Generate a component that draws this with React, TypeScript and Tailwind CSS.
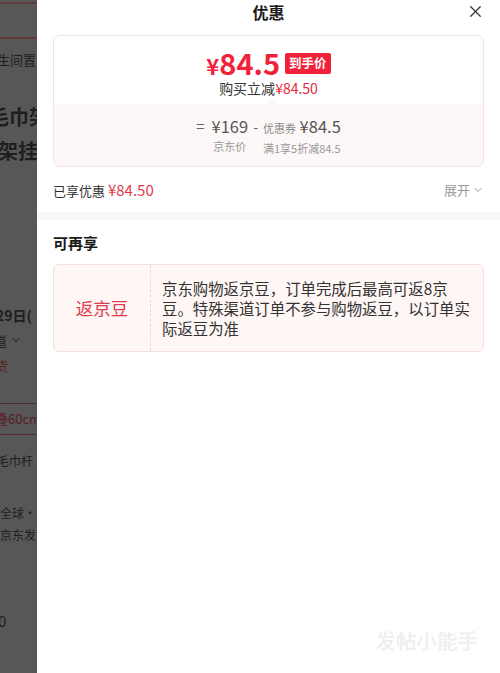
import { X, ChevronDown } from "lucide-react"

const font = { fontFamily: '"Noto Sans CJK SC", "Noto Sans", sans-serif' }

const BackdropPage = () => {
  return <div className="w-[37px] shrink-0 h-full bg-[#575757] overflow-hidden relative text-[#1e1e1e]">
    <div className="h-[2px] mt-[2px] bg-[#5e3c3c]"></div>
    <div className="h-[2px] mt-[33px] bg-[#5e3c3c]"></div>
    <div className="whitespace-nowrap text-[13px] mt-[11px] -ml-[3px]">生间置</div>
    <div className="whitespace-nowrap text-[20px] font-bold leading-[32px] mt-[31px] -ml-[11px]">毛巾架</div>
    <div className="whitespace-nowrap text-[20px] font-bold leading-[32px] mt-[2px] -ml-[2px]">架挂件</div>
    <div className="whitespace-nowrap text-[14px] font-bold mt-[138px] -ml-[4px]">29日(</div>
    <div className="whitespace-nowrap text-[13px] mt-[5px] -ml-[6px] flex items-center">道<ChevronDown size={12} className="ml-[3px]" /></div>
    <div className="whitespace-nowrap text-[13px] mt-[6px] -ml-[5px] text-[#5a1d22]">货</div>
    <div className="mt-[27px] border-y border-[#5a2a2e] h-[32px] flex items-center whitespace-nowrap text-[13px] text-[#5a1d22] -ml-[5px]">叠60cm</div>
    <div className="whitespace-nowrap text-[12px] mt-[17px] -ml-[3px]">毛巾杆</div>
    <div className="whitespace-nowrap text-[12px] mt-[34px]">全球·</div>
    <div className="whitespace-nowrap text-[12px] mt-[4px]">京东发</div>
    <div className="whitespace-nowrap text-[15px] mt-[66px] -ml-[2px]">0</div>
  </div>
}

export default function App() {
  return <div style={font} className="flex w-[500px] h-[673px] overflow-hidden bg-white">
    <BackdropPage />
    <div className="flex-1 h-full bg-white relative flex flex-col">
      <div className="h-[24px] flex items-center justify-center relative">
        <div className="text-[16px] font-bold text-[#1a1a1a] leading-none">优惠</div>
        <X size={19} strokeWidth={1.6} className="absolute right-[15px] top-[2px] text-[#333]" />
      </div>

      <div className="mx-[16px] mt-[11px] border border-[#f3e3e5] rounded-[7px] overflow-hidden">
        <div className="h-[68px] flex flex-col items-center pt-[13px]">
          <div className="flex items-center h-[27px]">
            <span className="text-[#f0233a] font-bold text-[22px] leading-none mt-[4px]">¥</span>
            <span className="text-[#f0233a] font-bold text-[29px] leading-none">84.5</span>
            <span className="ml-[5px] bg-[#f0233a] text-white text-[12.5px] font-bold rounded-[2px] px-[4px] h-[21px] flex items-center mt-[2px]">到手价</span>
          </div>
          <div className="text-[14px] leading-none mt-[5px] text-[#333]">购买立减<span className="text-[#e8293b]">¥84.50</span></div>
        </div>
        <div className="h-[62px] bg-[#fdf7f7] relative flex justify-center pt-[11px] text-[#555]">
          <div className="absolute -top-[4px] left-[215px] w-[8px] h-[8px] rotate-45 bg-[#fdf7f7]"></div>
          <div className="flex items-start">
            <span className="text-[15px] leading-[22px] mr-[7px] text-[#666]">=</span>
            <div className="flex flex-col items-center">
              <span className="text-[16.5px] leading-[22px]">¥169</span>
              <span className="text-[11px] text-[#999] mt-[4px] leading-none">京东价</span>
            </div>
            <span className="text-[14px] leading-[22px] mx-[5px] text-[#666]">-</span>
            <div className="flex flex-col items-start">
              <span className="leading-[22px]"><span className="text-[11px] text-[#888]">优惠券</span> <span className="text-[16.5px]">¥84.5</span></span>
              <span className="text-[11px] text-[#999] mt-[4px] leading-none">满1享5折减84.5</span>
            </div>
          </div>
        </div>
      </div>

      <div className="mx-[16px] mt-[13px] flex items-center justify-between h-[20px]">
        <div className="text-[13px] text-[#333]">已享优惠 <span className="text-[15px] text-[#e8394a]">¥84.50</span></div>
        <div className="text-[13px] text-[#999] flex items-center">展开<ChevronDown size={12} className="ml-[2px]" /></div>
      </div>

      <div className="h-[8px] bg-[#f5f7fb] mt-[12px]"></div>

      <div className="mx-[16px] mt-[12px] text-[15px] font-bold text-[#1a1a1a] leading-[22px]">可再享</div>

      <div className="mx-[16px] mt-[10px] border border-[#f5dfe2] bg-[#fff6f6] rounded-[6px] flex min-h-[88px]">
        <div className="w-[97px] shrink-0 flex items-center justify-center border-r border-dashed border-[#f0d4d8] text-[17.5px] text-[#dc3d4c]">返京豆</div>
        <div className="flex-1 pl-[11px] pr-[11px] py-[13px] text-[15.4px] leading-[20px] text-[#333]">京东购物返京豆，订单完成后最高可返8京豆。特殊渠道订单不参与购物返豆，以订单实际返豆为准</div>
      </div>

      <div className="absolute right-[22px] bottom-[17px] text-[20.5px] text-[#efefef] [text-shadow:0_0_1px_rgba(0,0,0,0.08)]">发帖小能手</div>
    </div>
  </div>
}
